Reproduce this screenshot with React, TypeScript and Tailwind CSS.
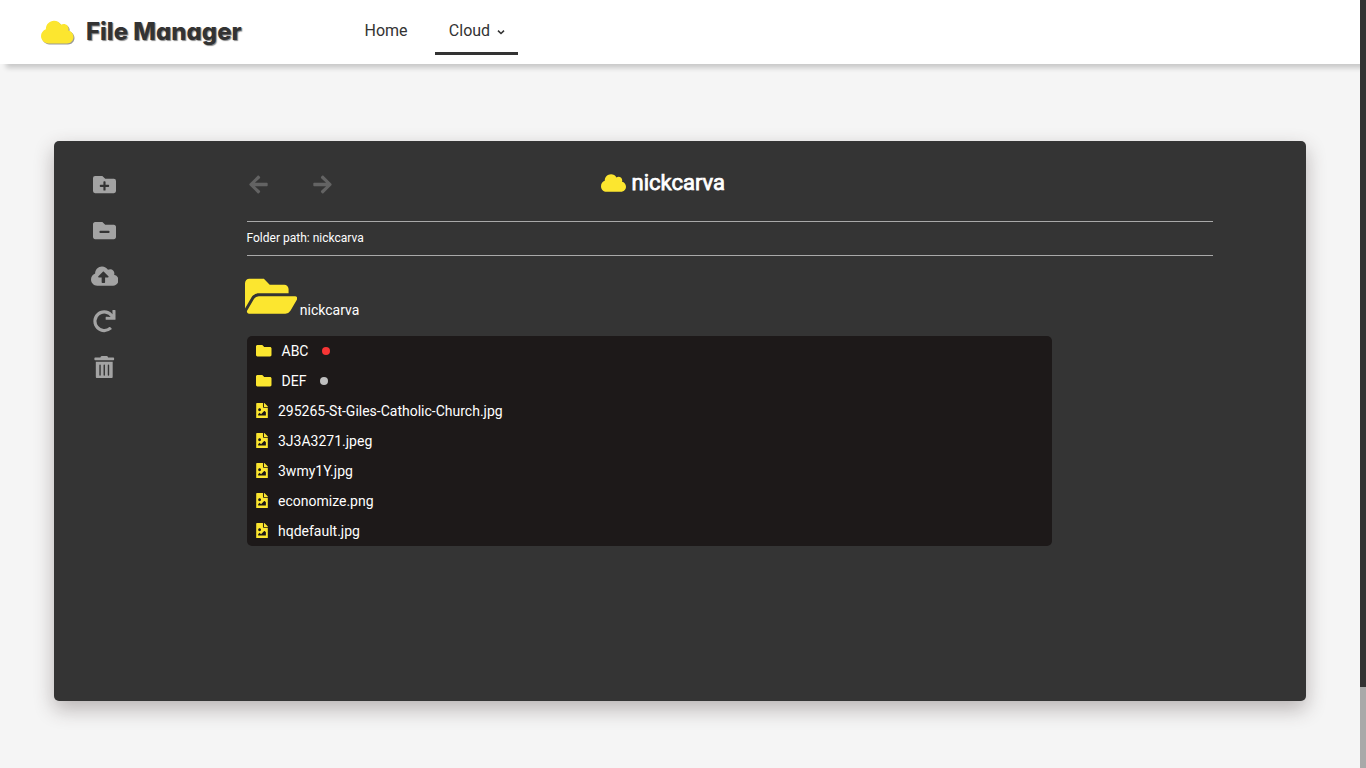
import type { ReactNode } from "react";
import {
  FaArrowLeft,
  FaArrowRight,
  FaCloud,
  FaCloudUploadAlt,
  FaFileImage,
  FaFolder,
  FaFolderMinus,
  FaFolderOpen,
  FaFolderPlus,
  FaRedo,
  FaTrashAlt,
} from "react-icons/fa";

const folders = [
  { name: "ABC", dot: "bg-[#f73535]" },
  { name: "DEF", dot: "bg-[#bfbfbf]" },
];

const files = [
  "295265-St-Giles-Catholic-Church.jpg",
  "3J3A3271.jpeg",
  "3wmy1Y.jpg",
  "economize.png",
  "hqdefault.jpg",
];

function Tool({ label, children }: { label: string; children: ReactNode }) {
  return (
    <button aria-label={label} className="flex h-[45.6px] w-8 items-center justify-center text-[#a3a3a3]">
      {children}
    </button>
  );
}

function Header() {
  return (
    <header className="z-10 flex h-16 shrink-0 bg-white shadow-[6px_4px_5px_rgba(0,0,0,0.18)]">
      <div className="flex w-[351px] items-center pl-[41px]">
        <FaCloud className="mb-px h-[26px] w-[32.5px] text-[#fce62f] drop-shadow-[1px_1px_0px_#999999]" />
        <span className="ml-[12.5px] whitespace-nowrap font-['Inter',sans-serif] text-[24px] font-extrabold leading-8 text-[#333333] [font-feature-settings:'cv11'] [text-shadow:1px_1px_1px_#888888]">
          File Manager
        </span>
      </div>
      <nav className="flex h-[55px] gap-[14px] text-base leading-6 text-[#333333]">
        <a className="w-[70px] pt-[19px] text-center">Home</a>
        <a className="flex w-[83px] justify-center gap-2 border-b-[3px] border-[#333333] pt-[19px]">
          Cloud
          <svg viewBox="0 0 6 5" className="mt-[11px] h-[5px] w-[6px] overflow-visible" fill="none" stroke="#333333" strokeWidth="1.6">
            <path d="M0 .7 3 3.5 6 .7" />
          </svg>
        </a>
      </nav>
    </header>
  );
}

export default function App() {
  return (
    <div className="flex h-screen w-screen overflow-hidden bg-[#f5f5f5] font-['Roboto',sans-serif]">
      <div className="flex min-w-0 flex-1 flex-col">
        <Header />
        <main className="ml-[54px] mt-[77px] flex h-[560px] w-[1252px] rounded-[5px] bg-[#343434] text-white shadow-[0_8px_20px_rgba(60,45,45,0.33)]">
          <aside className="flex w-[193px] flex-col pl-[34.5px] pt-[21px]">
            <Tool label="New folder"><FaFolderPlus size={23} /></Tool>
            <Tool label="Remove folder"><FaFolderMinus size={23} /></Tool>
            <Tool label="Upload"><FaCloudUploadAlt className="mb-[0.5px] h-[22px] w-[27.5px]" /></Tool>
            <Tool label="Refresh"><FaRedo size={22.5} /></Tool>
            <Tool label="Delete"><FaTrashAlt size={22.5} className="mb-[0.5px]" /></Tool>
          </aside>
          <section className="w-[966px]">
            <div className="flex h-20 items-start">
              <div className="flex gap-[43px] pl-px pt-[33px] text-[#636363]">
                <FaArrowLeft size={21} />
                <FaArrowRight size={21} />
              </div>
              <h1 className="ml-[268px] flex items-center gap-[5.5px] pt-[26px] text-[22px] font-normal leading-8 [-webkit-text-stroke:0.75px_white]">
                <FaCloud className="mb-px h-5 w-[25px] text-[#fce62f]" />
                nickcarva
              </h1>
            </div>
            <div className="flex h-[35px] items-center border-y border-[#a9a9a9] pb-[2px] text-xs">
              <span className="-ml-[0.5px]">Folder path: nickcarva</span>
            </div>
            <div className="-ml-[2.5px] flex h-20 items-start pt-[16.5px]">
              <FaFolderOpen className="h-[46.5px] w-[52.3px] text-[#fce62f]" />
              <span className="ml-[3px] mt-[27.5px] text-sm">nickcarva</span>
            </div>
            <ul className="w-[805px] overflow-hidden rounded-[5px] bg-[#1d1919] text-sm">
              {folders.map((folder) => (
                <li key={folder.name} className="flex h-[30px] items-center pl-[9px]">
                  <FaFolder className="mb-px text-[#fce62f]" size={15.5} />
                  <span className="ml-[10px]">{folder.name}</span>
                  <span className={`ml-[13.6px] size-2 rounded-full ${folder.dot}`} />
                </li>
              ))}
              {files.map((name) => (
                <li key={name} className="flex h-[30px] items-center pl-[9px]">
                  <FaFileImage className="mb-px h-[15.5px] w-3 text-[#fce62f]" />
                  <span className="ml-[10px]">{name}</span>
                </li>
              ))}
            </ul>
          </section>
        </main>
      </div>
      <div className="z-20 w-1.5 shrink-0 bg-[#a9a9a9]">
        <div className="h-[687px] bg-[#333333]" />
      </div>
    </div>
  );
}
